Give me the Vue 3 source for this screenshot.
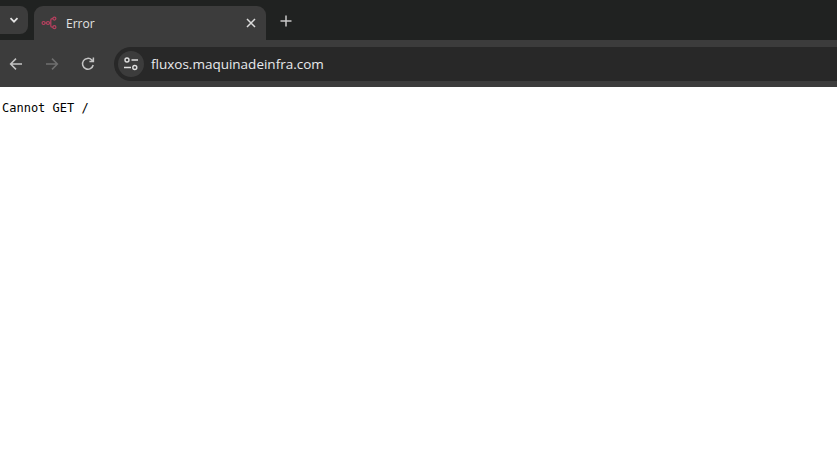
<script setup>
const tabTitle = "Error";
const address = "fluxos.maquinadeinfra.com";
</script>

<template>
    <div class="window">
        <div class="tabstrip">
            <button class="tab-search">
                <svg width="12" height="12" viewBox="0 0 12 12">
                    <path d="M2.5 4.2 6 7.7l3.5-3.5" fill="none" stroke="#e3e3e3" stroke-width="1.7" />
                </svg>
            </button>
            <div class="tab">
                <svg class="favicon" width="16" height="16" viewBox="0 0 16 16">
                    <g fill="none" stroke="#b8405f" stroke-width="1.2">
                        <circle cx="2.6" cy="8" r="1.5" />
                        <circle cx="7" cy="8" r="1.5" />
                        <circle cx="13.4" cy="3.6" r="1.5" />
                        <circle cx="13.4" cy="12.2" r="1.5" />
                        <path d="M4.1 8h1.4M8.5 8h1.3M12 3.6h-.8c-1 0-1.4.6-1.4 1.4v6c0 .8.4 1.2 1.4 1.2h.8" />
                    </g>
                </svg>
                <span class="tab-title">{{ tabTitle }}</span>
                <svg class="tab-close" width="10" height="10" viewBox="0 0 10 10">
                    <path d="M1 1l8 8M9 1 1 9" stroke="#dcdcdc" stroke-width="1.5" />
                </svg>
            </div>
            <svg class="new-tab" width="12" height="12" viewBox="0 0 12 12">
                <path d="M6 .5v11M.5 6h11" stroke="#c8c8c8" stroke-width="1.5" />
            </svg>
        </div>
        <div class="toolbar">
            <svg class="nav back" width="16" height="16" viewBox="0 0 16 16">
                <path d="M14 8H2.8M8 2.6 2.6 8 8 13.4" fill="none" stroke="#c4c4c4" stroke-width="1.5" />
            </svg>
            <svg class="nav forward" width="16" height="16" viewBox="0 0 16 16">
                <path d="M2 8h11.2M8 2.6 13.4 8 8 13.4" fill="none" stroke="#6f6f6f" stroke-width="1.5" />
            </svg>
            <svg class="nav reload" width="16" height="16" viewBox="0 0 16 16">
                <path d="M13.2 9a5.4 5.4 0 1 1-1.4-5L13.4 5.6M13.4 1.6v4h-4" fill="none" stroke="#c4c4c4" stroke-width="1.5" />
            </svg>
            <div class="omnibox">
                <div class="site-info">
                    <svg width="16" height="16" viewBox="0 0 16 16">
                        <g fill="none" stroke="#dedede" stroke-width="1.4">
                            <circle cx="4" cy="4" r="2" />
                            <circle cx="11.8" cy="11.5" r="2" />
                            <path d="M8.5 4h6.5M1 11.5h7" />
                        </g>
                    </svg>
                </div>
                <span class="address">{{ address }}</span>
            </div>
        </div>
        <main class="page">
            <pre>Cannot GET /</pre>
        </main>
    </div>
</template>

<style scoped>
.window {
    display: flex;
    flex-direction: column;
    height: 473px;
    background: #fff;
    overflow: hidden;
}

.tabstrip {
    display: flex;
    align-items: flex-start;
    height: 40px;
    background: #202221;
    padding-top: 6px;
    box-sizing: border-box;
}

.tab-search {
    width: 28px;
    height: 28px;
    padding: 0;
    border: none;
    border-radius: 0 8px 8px 0;
    background: #3c3c3c;
    display: flex;
    align-items: center;
    justify-content: center;
}

.tab {
    display: flex;
    align-items: center;
    width: 232px;
    height: 34px;
    margin-left: 6px;
    padding: 0 10px 0 7px;
    box-sizing: border-box;
    background: #3c3c3c;
    border-radius: 9px 9px 0 0;
}

.favicon {
    flex: none;
}

.tab-title {
    margin-left: 9px;
    flex: 1;
    font-family: "Open Sans", sans-serif;
    font-size: 12px;
    color: #e3e3e3;
}

.new-tab {
    margin: 9px 0 0 14px;
}

.toolbar {
    display: flex;
    align-items: center;
    height: 47px;
    background: #3c3c3c;
    padding-left: 8px;
    box-sizing: border-box;
}

.nav {
    flex: none;
    margin-right: 20px;
}

.omnibox {
    display: flex;
    align-items: center;
    flex: 1;
    height: 34px;
    margin-left: -2px;
    margin-right: -20px;
    padding-left: 4px;
    background: #282828;
    border-radius: 17px 0 0 17px;
}

.site-info {
    display: flex;
    align-items: center;
    justify-content: center;
    width: 26px;
    height: 26px;
    border-radius: 50%;
    background: #3c3c3c;
}

.address {
    margin-left: 7px;
    font-family: "Open Sans", sans-serif;
    font-size: 13.5px;
    color: #e8eaed;
}

.page {
    flex: 1;
    padding-top: 14px;
}

.page pre {
    margin: 0 0 0 2px;
    font-family: "DejaVu Sans Mono", monospace;
    font-size: 12px;
    color: #000;
}
</style>
